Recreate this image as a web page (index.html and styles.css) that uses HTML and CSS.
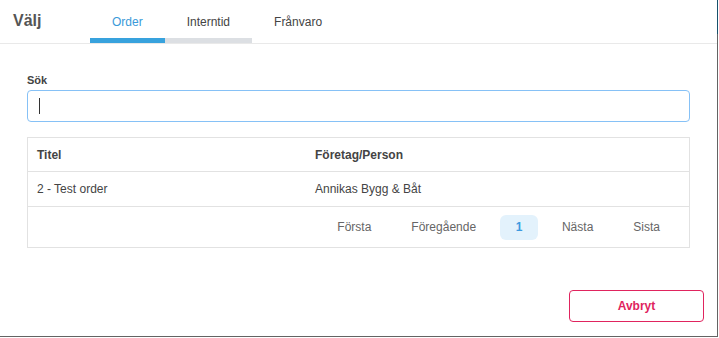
FILE: index.html
```html
<!DOCTYPE html>
<html lang="sv">
<head>
<meta charset="utf-8">
<title>Välj</title>
<link rel="stylesheet" href="styles.css">
</head>
<body>
<div class="stage">
  <div class="modal">
    <header class="modal-header">
      <h1 class="modal-title">Välj</h1>
      <nav class="tabs">
        <span class="tab tab-active">Order</span>
        <span class="tab tab-hover">Interntid</span>
        <span class="tab">Frånvaro</span>
      </nav>
    </header>
    <main class="modal-body">
      <label class="field-label">Sök</label>
      <div class="search-input"><span class="caret"></span></div>
      <div class="table">
        <div class="row row-head">
          <div class="cell">Titel</div>
          <div class="cell">Företag/Person</div>
        </div>
        <div class="row">
          <div class="cell">2 - Test order</div>
          <div class="cell">Annikas Bygg &amp; Båt</div>
        </div>
        <div class="pager">
          <span class="page-item">Första</span>
          <span class="page-item">Föregående</span>
          <span class="page-item page-current">1</span>
          <span class="page-item">Nästa</span>
          <span class="page-item">Sista</span>
        </div>
      </div>
    </main>
    <footer class="modal-footer">
      <button class="btn-cancel">Avbryt</button>
    </footer>
  </div>
</div>
</body>
</html>
```

FILE: styles.css
```css
* { box-sizing: border-box; }

html, body {
  margin: 0;
  padding: 0;
  background: #ffffff;
}

body {
  font-family: "Liberation Sans", Arial, sans-serif;
  font-size: 12px;
  color: #444;
  width: 719px;
  height: 338px;
  overflow: hidden;
}

.stage {
  width: 718px;
  height: 337px;
  background: linear-gradient(to bottom, #17506c 0, #17506c 34px, #636363 34px, #636363 100%);
}

.modal {
  width: 717px;
  height: 336px;
  background: #fff;
  display: flex;
  flex-direction: column;
}

.modal-header {
  display: flex;
  align-items: flex-start;
  height: 44px;
  border-bottom: 1px solid #e9e9e9;
  padding-left: 13px;
}

.modal-title {
  margin: 0;
  width: 77px;
  padding-top: 12px;
  font-size: 16px;
  font-weight: bold;
  line-height: 18px;
  color: #555;
}

.tabs {
  display: flex;
  height: 43px;
}

.tab {
  display: block;
  height: 43px;
  padding: 15px 22px 0;
  line-height: 14px;
  color: #444;
  border-bottom: 5px solid transparent;
}

.tab-active {
  color: #3a9ad9;
  border-bottom-color: #38a2dd;
}

.tab-hover {
  border-bottom-color: #dcdfe3;
}

.modal-body {
  padding: 30px 27px 0;
  display: flex;
  flex-direction: column;
}

.field-label {
  display: block;
  font-size: 11px;
  font-weight: bold;
  line-height: 13px;
  color: #444;
  margin-bottom: 3px;
}

.search-input {
  height: 32px;
  border: 1px solid #86c1f6;
  border-radius: 4px;
  padding: 7px 11px;
  display: flex;
  align-items: center;
}

.caret {
  display: block;
  width: 1px;
  height: 16px;
  background: #333;
}

.table {
  margin-top: 15px;
  border: 1px solid #e2e2e2;
}

.row {
  display: grid;
  grid-template-columns: 278px 1fr;
  border-bottom: 1px solid #e2e2e2;
  height: 35px;
}

.row-head {
  height: 34px;
  font-weight: bold;
}

.row .cell {
  padding: 0 9px;
  display: flex;
  align-items: center;
  line-height: 14px;
}

.row-head .cell {
  padding-top: 0;
}

.pager {
  display: flex;
  justify-content: flex-end;
  align-items: center;
  gap: 8px;
  height: 40px;
  padding-right: 13px;
}

.page-item {
  display: block;
  height: 25px;
  line-height: 25px;
  padding: 0 16px;
  color: #666;
  border-radius: 6px;
}

.page-current {
  padding: 0 15.6px;
  background: #e3f2fc;
  color: #3d9ae0;
  font-weight: bold;
}

.modal-footer {
  margin-top: auto;
  display: flex;
  justify-content: flex-end;
  padding: 0 13px 14px;
}

.btn-cancel {
  width: 135px;
  height: 32px;
  border: 1px solid #e0245e;
  border-radius: 4px;
  background: #fff;
  color: #e0245e;
  font-family: "Liberation Sans", Arial, sans-serif;
  font-size: 12px;
  font-weight: bold;
  padding: 0;
}
```
